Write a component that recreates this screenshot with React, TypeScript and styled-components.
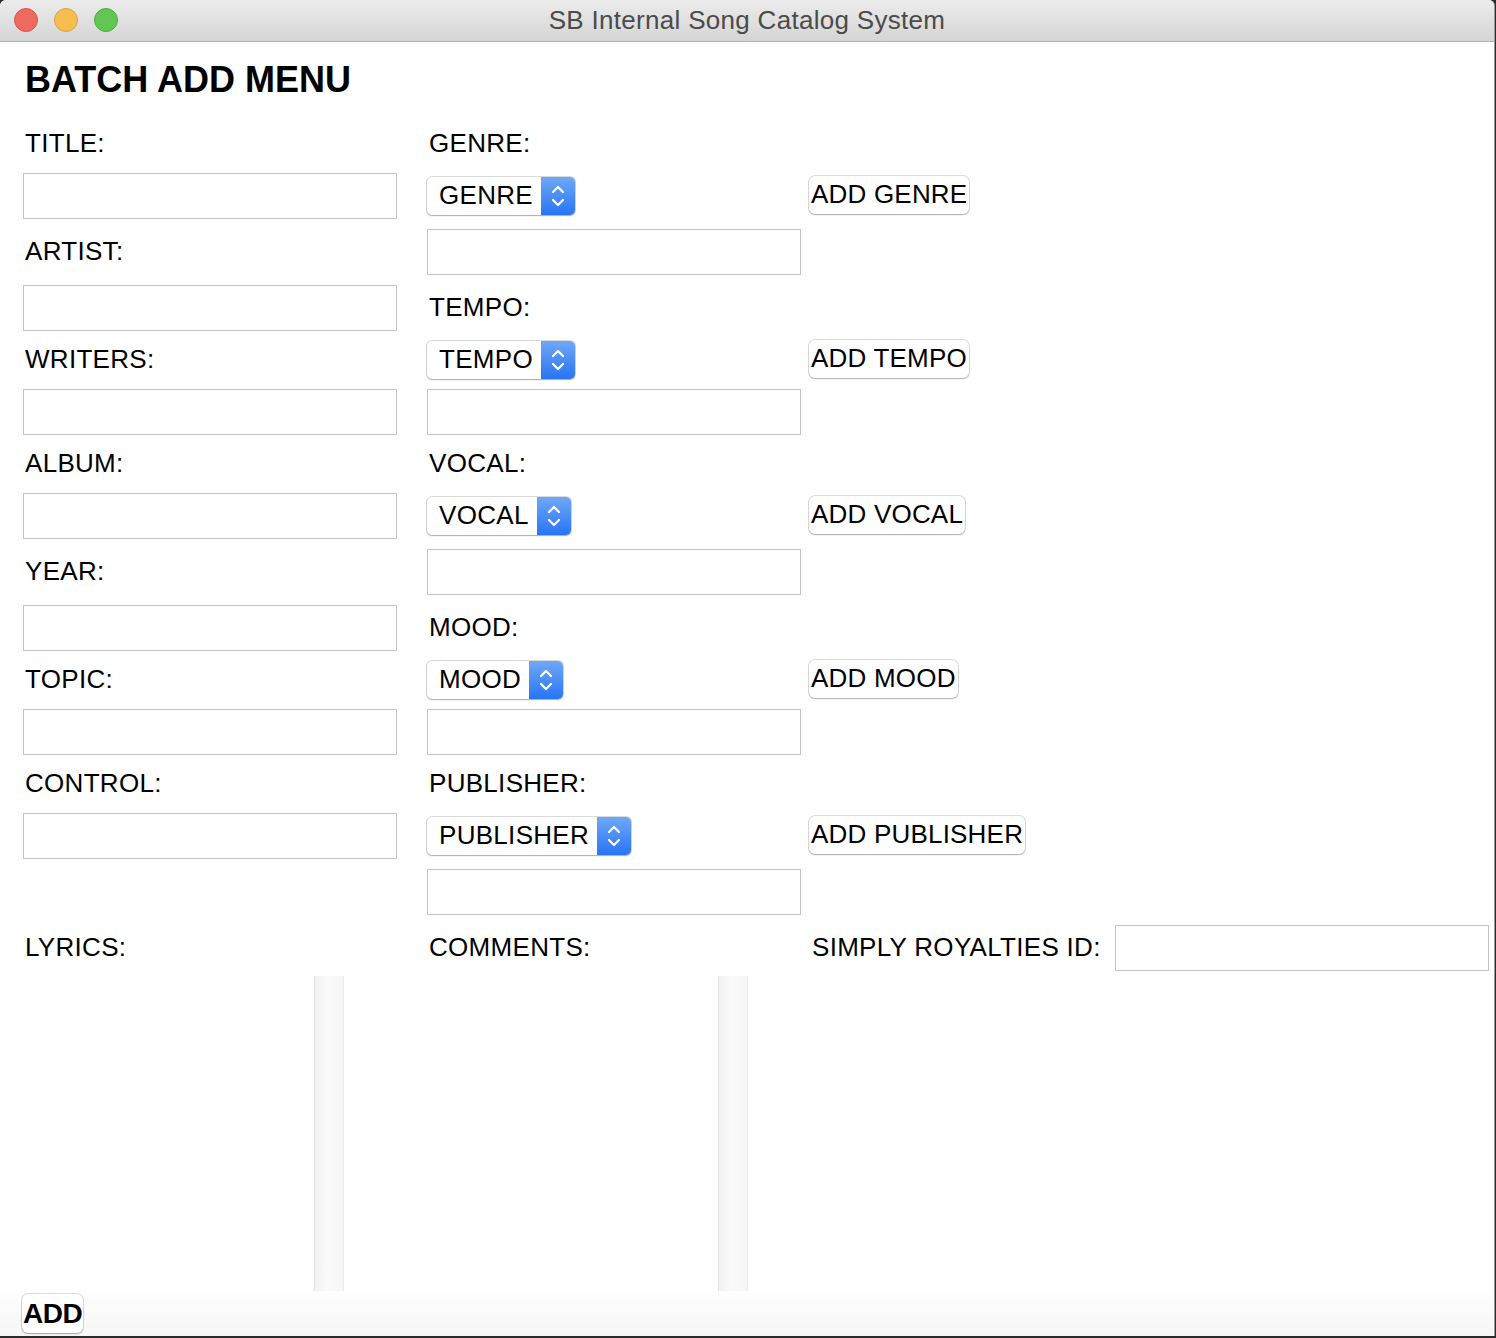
import React from "react";
import styled, { createGlobalStyle } from "styled-components";

const GlobalStyle = createGlobalStyle`
  html, body {
    margin: 0;
    padding: 0;
    background: #2b2b2b;
    overflow: hidden;
  }
  body {
    font-family: "Liberation Sans", Arial, sans-serif;
  }
`;

const Window = styled.div`
  width: 1495px;
  height: 1336px;
  background: #ffffff;
  border-right: 1px solid #9a9a9a;
  border-radius: 6px 6px 0 0;
  overflow: hidden;
  display: flex;
  flex-direction: column;
  box-sizing: border-box;
`;

const TitleBar = styled.div`
  height: 42px;
  flex: none;
  box-sizing: border-box;
  display: grid;
  grid-template-columns: 1fr auto 1fr;
  align-items: center;
  background: linear-gradient(#ececec, #d5d5d5);
  border-bottom: 1px solid #b3b3b3;
`;

const Lights = styled.div`
  display: flex;
  gap: 16px;
  padding-left: 14px;
  padding-bottom: 1px;
`;

const Light = styled.span<{ $fill: string; $edge: string }>`
  width: 24px;
  height: 24px;
  border-radius: 50%;
  background: ${(p) => p.$fill};
  border: 1px solid ${(p) => p.$edge};
  box-sizing: border-box;
`;

const WindowTitle = styled.div`
  font-size: 26px;
  letter-spacing: 0.3px;
  color: #4b4b4b;
  padding-bottom: 1px;
`;

const Form = styled.div`
  display: grid;
  padding-left: 23px;
  grid-template-columns: 404px 382px 306px 374px;
  grid-template-rows: 78px 48px 56px 56px 56px 48px 56px 48px 56px 56px 56px 48px 56px 48px 56px 56px 56px 315px;
`;

const Cell = styled.div<{ $row: number; $col: number; $span?: number }>`
  grid-row: ${(p) => p.$row};
  grid-column: ${(p) => p.$col} / span ${(p) => p.$span ?? 1};
  display: flex;
  align-items: center;
  min-width: 0;
`;

const Heading = styled.h1`
  margin: 0 0 2px 2px;
  font-size: 36px;
  line-height: 1;
  font-weight: bold;
  color: #000;
`;

const Label = styled.span<{ $indent?: number }>`
  font-size: 26px;
  line-height: 1;
  letter-spacing: 0.3px;
  color: #000;
  padding-left: ${(p) => p.$indent ?? 2}px;
  margin-bottom: 2px;
  white-space: nowrap;
`;

const Field = styled.input`
  width: 374px;
  height: 46px;
  box-sizing: border-box;
  border: 1px solid #c4c4c4;
  background: #fff;
  margin: 0;
  padding: 0 6px;
  font: inherit;
  outline: none;
`;

const Combo = styled.div`
  display: inline-flex;
  align-items: stretch;
  height: 38px;
  border-radius: 5px;
  background: #fff;
  box-shadow: 0 0 0 1px rgba(0, 0, 0, 0.14), 0 1px 1.5px rgba(0, 0, 0, 0.22);
  overflow: hidden;
  margin-bottom: 1px;
`;

const ComboText = styled.span`
  display: flex;
  align-items: center;
  font-size: 26px;
  letter-spacing: 0.3px;
  padding: 0 8px 0 12px;
  color: #000;
`;

const ComboArrows = styled.span`
  width: 34px;
  display: flex;
  align-items: center;
  justify-content: center;
  background: linear-gradient(#6fa8f8, #2874f4);
`;

const PushButton = styled.button`
  height: 38px;
  padding: 0 2px;
  border: none;
  border-radius: 6px;
  background: #fff;
  box-shadow: 0 0 0 1px rgba(0, 0, 0, 0.13), 0 1px 1.5px rgba(0, 0, 0, 0.22);
  font-family: "Liberation Sans", Arial, sans-serif;
  font-size: 26px;
  letter-spacing: 0.2px;
  color: #000;
  margin-bottom: 3px;
  cursor: default;
`;

const ScrollPane = styled.div`
  align-self: stretch;
  width: 321px;
  display: flex;
  justify-content: flex-end;
  background: #fff;
`;

const Track = styled.div`
  width: 30px;
  box-sizing: border-box;
  background: linear-gradient(to right, #f1f1f1, #fafafa 40%, #f6f6f6);
  border-left: 1px solid #e4e4e4;
  border-right: 1px solid #ebebeb;
`;

const Footer = styled.div`
  flex: 1;
  display: flex;
  align-items: center;
  padding-left: 22px;
  background: linear-gradient(#fefefe, #f6f6f6);
`;

const AddButton = styled(PushButton)`
  height: 39px;
  padding: 0 1px;
  font-size: 28px;
  font-weight: bold;
  letter-spacing: -0.5px;
  margin: 0;
`;

const Chevrons = () => (
  <svg width="16" height="28" viewBox="0 0 16 28" fill="none">
    <path
      d="M3 10 L8 5 L13 10 M3 18 L8 23 L13 18"
      stroke="#fff"
      strokeWidth="2.2"
      strokeLinecap="round"
      strokeLinejoin="round"
    />
  </svg>
);

const Select = ({ text }: { text: string }) => (
  <Combo>
    <ComboText>{text}</ComboText>
    <ComboArrows>
      <Chevrons />
    </ComboArrows>
  </Combo>
);

const leftLabels: [string, number][] = [
  ["TITLE:", 2],
  ["ARTIST:", 4],
  ["WRITERS:", 6],
  ["ALBUM:", 8],
  ["YEAR:", 10],
  ["TOPIC:", 12],
  ["CONTROL:", 14],
  ["LYRICS:", 17],
];
const leftFields = [3, 5, 7, 9, 11, 13, 15];

// each picker group: label row, then combo + button, then a text field
const pickers: [string, number][] = [
  ["GENRE", 2],
  ["TEMPO", 5],
  ["VOCAL", 8],
  ["MOOD", 11],
  ["PUBLISHER", 14],
];

const App = (): JSX.Element => {
  return (
    <>
      <GlobalStyle />
      <Window>
        <TitleBar>
          <Lights>
            <Light $fill="#ee6a5f" $edge="#d9564c" />
            <Light $fill="#f6be50" $edge="#dba43a" />
            <Light $fill="#62c554" $edge="#4fae42" />
          </Lights>
          <WindowTitle>SB Internal Song Catalog System</WindowTitle>
          <div />
        </TitleBar>
        <Form>
          <Cell $row={1} $col={1} $span={3}>
            <Heading>BATCH ADD MENU</Heading>
          </Cell>

          {leftLabels.map(([text, row]) => (
            <Cell key={text} $row={row} $col={1}>
              <Label>{text}</Label>
            </Cell>
          ))}
          {leftFields.map((row) => (
            <Cell key={row} $row={row} $col={1}>
              <Field />
            </Cell>
          ))}

          {pickers.map(([name, row]) => (
            <React.Fragment key={name}>
              <Cell $row={row} $col={2}>
                <Label>{name}:</Label>
              </Cell>
              <Cell $row={row + 1} $col={2}>
                <Select text={name} />
              </Cell>
              <Cell $row={row + 1} $col={3}>
                <PushButton>ADD {name}</PushButton>
              </Cell>
              <Cell $row={row + 2} $col={2}>
                <Field />
              </Cell>
            </React.Fragment>
          ))}

          <Cell $row={17} $col={2}>
            <Label>COMMENTS:</Label>
          </Cell>
          <Cell $row={17} $col={3}>
            <Label $indent={3}>SIMPLY ROYALTIES ID:</Label>
          </Cell>
          <Cell $row={17} $col={4}>
            <Field />
          </Cell>

          <Cell $row={18} $col={1}>
            <ScrollPane>
              <Track />
            </ScrollPane>
          </Cell>
          <Cell $row={18} $col={2}>
            <ScrollPane>
              <Track />
            </ScrollPane>
          </Cell>
        </Form>
        <Footer>
          <AddButton>ADD</AddButton>
        </Footer>
      </Window>
    </>
  );
};

export default App;
